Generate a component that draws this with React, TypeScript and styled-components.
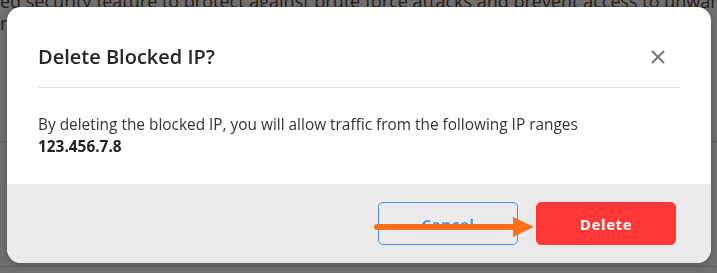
import React from "react";
import styled, { createGlobalStyle } from "styled-components";

const GlobalStyle = createGlobalStyle`
  html, body {
    margin: 0;
    padding: 0;
    background: #ffffff;
    overflow: hidden;
  }
  body {
    font-family: "Open Sans", "Liberation Sans", sans-serif;
  }
  * { box-sizing: border-box; }
`;

const Page = styled.div`
  width: 717px;
  height: 273px;
  overflow: hidden;
  background: #ffffff;
`;

const Intro = styled.p`
  margin: -10px 0 0 0;
  font-size: 18px;
  line-height: 22px;
  color: #5a4536;
  white-space: nowrap;
`;

const TableRow = styled.div<{ $h: number }>`
  height: ${(p) => p.$h}px;
  border-bottom: 1px solid #d4d4d4;
`;

const Overlay = styled.div`
  position: fixed;
  inset: 0;
  background: rgba(0, 0, 0, 0.56);
  display: flex;
  align-items: flex-start;
  padding: 7px 6px 0 7px;
`;

const Modal = styled.div`
  width: 704px;
  height: 256px;
  background: #ffffff;
  border-radius: 14px;
  box-shadow: 0 2px 8px rgba(0, 0, 0, 0.25);
  display: flex;
  flex-direction: column;
  overflow: hidden;
`;

const Header = styled.div`
  margin: 0 31px;
  height: 81px;
  padding-top: 30px;
  border-bottom: 1px solid #e2e2e2;
  display: flex;
  align-items: flex-start;
  justify-content: space-between;
`;

const Title = styled.h2`
  margin: 0;
  font-size: 20px;
  line-height: 40px;
  font-weight: 600;
  color: #262626;
`;

const CloseButton = styled.button`
  width: 44px;
  height: 40px;
  border: none;
  background: transparent;
  padding: 0;
  display: flex;
  align-items: center;
  justify-content: center;
  cursor: pointer;
`;

const Body = styled.div`
  flex: 1;
  padding: 26px 31px 0;
  font-size: 15.4px;
  line-height: 22px;
  color: #333333;
`;

const Strong = styled.div`
  font-weight: 700;
  color: #222222;
`;

const Footer = styled.div`
  position: relative;
  height: 79px;
  background: #ebebeb;
  display: flex;
  justify-content: flex-end;
  align-items: flex-start;
  gap: 18px;
  padding: 18px 35px 0 0;
`;

const Button = styled.button<{ $variant: "outline" | "danger" }>`
  width: 140px;
  height: 43px;
  border-radius: 5px;
  font-family: "Open Sans", "Liberation Sans", sans-serif;
  font-size: 15px;
  font-weight: 700;
  letter-spacing: 0.6px;
  cursor: pointer;
  border: 1px solid ${(p) => (p.$variant === "outline" ? "#4a8fe3" : "#ff3838")};
  background: ${(p) => (p.$variant === "outline" ? "transparent" : "#ff3838")};
  color: ${(p) => (p.$variant === "outline" ? "#4a8fe3" : "#ffffff")};
`;

const Arrow = styled.svg`
  position: absolute;
  left: 358px;
  top: 32px;
  pointer-events: none;
`;

export default function App() {
  return (
    <>
      <GlobalStyle />
      <Page>
        <Intro>
          ed security feature to protect against brute force attacks and prevent access to unwanted
          <br />
          rs.
        </Intro>
        <TableRow $h={108} />
        <TableRow $h={125} />
      </Page>
      <Overlay>
        <Modal>
          <Header>
            <Title>Delete Blocked IP?</Title>
            <CloseButton aria-label="Close">
              <svg width="14" height="14" viewBox="0 0 14 14">
                <path d="M1 1 L13 13 M13 1 L1 13" stroke="#767676" strokeWidth="2" fill="none" />
              </svg>
            </CloseButton>
          </Header>
          <Body>
            By deleting the blocked IP, you will allow traffic from the following IP ranges
            <Strong>123.456.7.8</Strong>
          </Body>
          <Footer>
            <Button $variant="outline">Cancel</Button>
            <Button $variant="danger">Delete</Button>
            <Arrow width="170" height="24" viewBox="0 0 170 24">
              <line x1="12" y1="11" x2="150" y2="11" stroke="#ff6f1a" strokeWidth="6" strokeLinecap="round" />
              <polygon points="148,1 169,11 148,21" fill="#ff6f1a" />
            </Arrow>
          </Footer>
        </Modal>
      </Overlay>
    </>
  );
}
